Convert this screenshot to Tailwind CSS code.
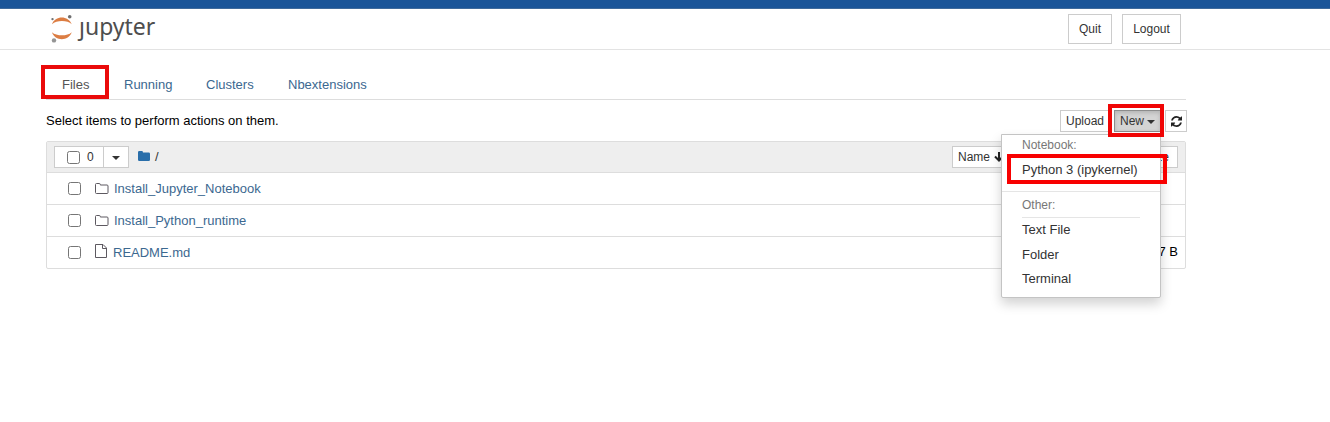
<!DOCTYPE html>
<html lang="en">
<head>
<meta charset="utf-8">
<title>Jupyter</title>
<script src="https://cdn.jsdelivr.net/npm/@tailwindcss/browser@4"></script>
</head>
<body class="relative h-[422px] overflow-hidden bg-white font-['Liberation_Sans',Arial,sans-serif] text-[13px] leading-[18px] text-black">
<div class="h-[9px] border-b border-[#3f6b9c] bg-[#1a5598]"></div>
<header class="flex h-[41px] items-start border-b border-[#e3e3e3] pl-[50px] pr-[149px]">
  <svg class="mt-[5px] h-[30px] w-[24px] shrink-0" viewBox="0 0 24 30">
    <path d="M2 10.300C5 1.200 18.500 1.200 21.700 10.300C17.500 5.900 6.500 5.900 2 10.300Z" fill="#dc7d43"/>
    <path d="M2 18.200C5 27.500 18.500 27.500 21.700 18.200C17.500 22.400 6.500 22.400 2 18.200Z" fill="#dc7d43"/>
    <circle cx="19.700" cy="2.700" r="1.800" fill="#6f6f70"/>
    <circle cx="2.500" cy="5.100" r="1.200" fill="#717171"/>
    <circle cx="4" cy="26.400" r="2.200" fill="#959595"/>
  </svg>
  <div class="ml-[5px] mt-[1px] font-['Noto_Sans'] text-[23px] leading-[32px] text-[#4e4e4e]" aria-label="jupyter">ȷupyter</div>
  <div class="ml-auto mt-[5px] flex gap-[10px] text-[12px] text-[#333]">
    <button class="h-[30px] w-[44px] border border-[#ccc]">Quit</button>
    <button class="h-[30px] w-[59px] border border-[#ccc]">Logout</button>
  </div>
</header>
<main class="ml-[46px] w-[1140px] pt-[16px]">
  <nav class="flex h-[34px] items-center border-b border-[#ddd] pl-[16px] pt-[5px] text-[#3c6890]">
    <span class="w-[62px] text-[#555]">Files</span>
    <span class="w-[82px]">Running</span>
    <span class="w-[82px]">Clusters</span>
    <span>Nbextensions</span>
  </nav>
  <div class="mr-[-1px] flex h-[41px] items-start pt-[10px]">
    <span class="mt-[2px]">Select items to perform actions on them.</span>
    <div class="ml-auto flex text-[12px] text-[#333]">
      <button class="h-[22px] w-[50px] border border-[#ccc]">Upload</button>
      <button class="ml-[4px] flex h-[22px] w-[47px] items-center border border-[#8c8c8c] bg-[#d4d4d4] pl-[5px] shadow-[inset_0_2px_4px_rgba(0,0,0,0.15)]">New<svg class="ml-[3px] mt-[2px] h-[4px] w-[8px]" viewBox="0 0 8 4"><path d="M0 0h8L4 4z" fill="#333"/></svg></button>
      <button class="ml-[4px] flex h-[22px] w-[22px] items-center justify-center border border-[#ccc]"><svg class="h-[11px] w-[11px]" viewBox="0 0 1536 1536"><path fill="#222" d="M1511 928q0 5-1 7-64 268-268 434.500T764 1536q-146 0-282.500-55T238 1324l-129 129q-19 19-45 19t-45-19-19-45V960q0-26 19-45t45-19h448q26 0 45 19t19 45-19 45l-137 137q71 66 161 102t187 36q134 0 250-65t186-179q11-17 53-117 8-23 30-23h192q13 0 22.500 9.500t9.500 22.500zm25-800v448q0 26-19 45t-45 19h-448q-26 0-45-19t-19-45 19-45l138-138Q969 256 768 256q-134 0-250 65T332 500q-11 17-53 117-8 23-30 23H50q-13 0-22.500-9.500T18 608v-7q65-268 270-434.500T768 0q146 0 284 55.500T1297 212l130-129q19-19 45-19t45 19 19 45z"/></svg></button>
    </div>
  </div>
  <section class="rounded-[2px] border border-[#ddd]">
    <div class="flex h-[30px] items-center bg-[#eee] pl-[7px] pr-[7px]">
      <div class="flex h-[22px] border border-[#ccc] bg-white text-[12px] text-[#333]">
        <div class="flex w-[49px] items-center border-r border-[#ccc] pl-[12px]"><span class="mr-[7px] h-[13px] w-[13px] rounded-[2.5px] border border-[#767676] bg-white"></span>0</div>
        <div class="flex w-[24px] items-center justify-center"><svg class="mt-[2px] h-[4px] w-[8px]" viewBox="0 0 8 4"><path d="M0 0h8L4 4z" fill="#333"/></svg></div>
      </div>
      <svg class="mb-[2px] ml-[9px] h-[10px] w-[12px]" viewBox="0 0 12 10"><path d="M0 1.3Q0 0 1.3 0h2.5Q5 0 5 1.4h5.700Q12 1.400 12 2.700V8.700Q12 10 10.700 10H1.300Q0 10 0 8.700z" fill="#296eaa"/></svg>
      <span class="ml-[5px] text-[#333]">/</span>
      <div class="ml-auto flex text-[12px] text-[#333]">
        <button class="flex h-[22px] w-[60px] items-center border border-[#ccc] bg-white pl-[5px]">Name<svg class="ml-[4px] h-[10px] w-[10px]" viewBox="0 0 10 10"><path d="M5 0v8M1 4.500l4 4 4-4" fill="none" stroke="#222" stroke-width="2"/></svg></button>
        <button class="ml-[4px] h-[22px] w-[102px] border border-[#ccc] bg-white">Last Modified</button>
        <button class="ml-[4px] h-[22px] w-[56px] border border-[#ccc] bg-white pl-0 pr-[8px] text-right whitespace-nowrap">File size</button>
      </div>
    </div>
    <div class="flex h-[32px] items-center border-t border-[#ddd] pl-[21px]">
      <span class="h-[13px] w-[13px] rounded-[2.5px] border border-[#767676]"></span>
      <svg class="mb-[1px] ml-[14px] h-[11px] w-[14px]" viewBox="0 0 14 11"><path d="M.5 1.500q0-1 1-1h2.800q1 0 1 1v.5h6.700q1 0 1 1v6.500q0 1-1 1H1.500q-1 0-1-1z" fill="none" stroke="#5d5960"/></svg>
      <span class="ml-[5px] text-[#3c6890]">Install_Jupyter_Notebook</span>
    </div>
    <div class="flex h-[32px] items-center border-t border-[#ddd] pl-[21px]">
      <span class="h-[13px] w-[13px] rounded-[2.5px] border border-[#767676]"></span>
      <svg class="mb-[1px] ml-[14px] h-[11px] w-[14px]" viewBox="0 0 14 11"><path d="M.5 1.500q0-1 1-1h2.800q1 0 1 1v.5h6.700q1 0 1 1v6.500q0 1-1 1H1.500q-1 0-1-1z" fill="none" stroke="#5d5960"/></svg>
      <span class="ml-[5px] text-[#3c6890]">Install_Python_runtime</span>
    </div>
    <div class="flex h-[32px] items-center border-t border-[#ddd] pl-[21px] pr-[7px]">
      <span class="h-[13px] w-[13px] rounded-[2.5px] border border-[#767676]"></span>
      <svg class="mb-[4px] ml-[14px] h-[14px] w-[12px]" viewBox="0 0 12 14"><path d="M.5.500h7.500l3.500 3.500v9.500H.5zM7.500.500v4h4" fill="none" stroke="#5d5960"/></svg>
      <span class="ml-[6px] text-[#3c6890]">README.md</span>
      <span class="mb-[2px] ml-auto">7 B</span>
    </div>
  </section>
</main>
<div class="absolute left-[1001px] top-[134px] h-[164px] w-[160px] rounded-b-[2px] border border-[#c4c4c4] bg-white pl-[20px] text-[#333] shadow-[0_6px_12px_rgba(0,0,0,0.175)]">
  <div class="mt-[1px] text-[12px] text-[#777]">Notebook:</div>
  <div class="mt-[7px]">Python 3 (ipykernel)</div>
  <div class="-ml-[20px] mt-[12px] border-t border-[#e5e5e5]"></div>
  <div class="mt-[4px] text-[12px] text-[#777]">Other:</div>
  <div class="mr-[20px] mt-[3px] border-t border-[#e5e5e5]"></div>
  <div class="mt-[3px]">Text File</div>
  <div class="mt-[7px]">Folder</div>
  <div class="mt-[6px]">Terminal</div>
</div>
<div class="absolute left-[41px] top-[65px] h-[34px] w-[68px] border-4 border-[#ea0a0a]"></div>
<div class="absolute left-[1108px] top-[104px] h-[33px] w-[56px] border-4 border-[#f00505]"></div>
<div class="absolute left-[1007px] top-[154px] h-[30px] w-[160px] border-4 border-[#f80000]"></div>
</body>
</html>
